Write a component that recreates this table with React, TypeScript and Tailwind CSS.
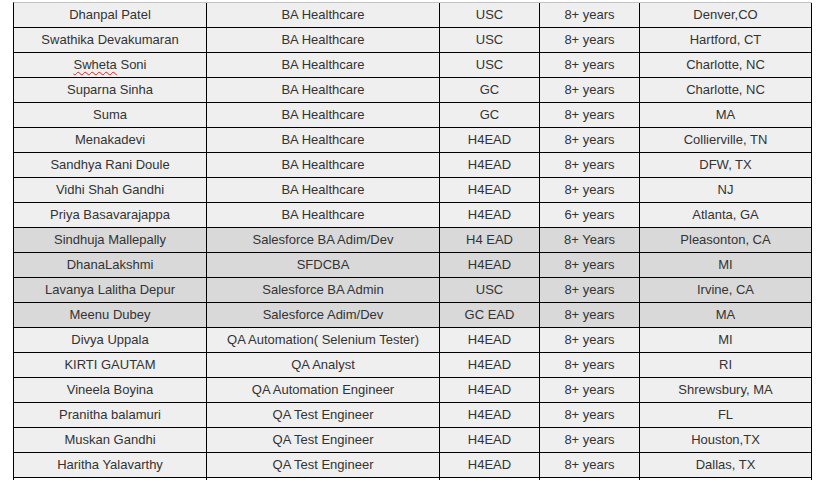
import React from 'react';

interface Candidate {
  name: string;
  skill: string;
  visa: string;
  exp: string;
  location: string;
  shaded?: boolean;
}

const candidates: Candidate[] = [
  { name: 'Dhanpal Patel', skill: 'BA Healthcare', visa: 'USC', exp: '8+ years', location: 'Denver,CO' },
  { name: 'Swathika Devakumaran', skill: 'BA Healthcare', visa: 'USC', exp: '8+ years', location: 'Hartford, CT' },
  { name: 'Swheta Soni', skill: 'BA Healthcare', visa: 'USC', exp: '8+ years', location: 'Charlotte, NC' },
  { name: 'Suparna Sinha', skill: 'BA Healthcare', visa: 'GC', exp: '8+ years', location: 'Charlotte, NC' },
  { name: 'Suma', skill: 'BA Healthcare', visa: 'GC', exp: '8+ years', location: 'MA' },
  { name: 'Menakadevi', skill: 'BA Healthcare', visa: 'H4EAD', exp: '8+ years', location: 'Collierville, TN' },
  { name: 'Sandhya Rani Doule', skill: 'BA Healthcare', visa: 'H4EAD', exp: '8+ years', location: 'DFW, TX' },
  { name: 'Vidhi Shah Gandhi', skill: 'BA Healthcare', visa: 'H4EAD', exp: '8+ years', location: 'NJ' },
  { name: 'Priya Basavarajappa', skill: 'BA Healthcare', visa: 'H4EAD', exp: '6+ years', location: 'Atlanta, GA' },
  { name: 'Sindhuja Mallepally', skill: 'Salesforce BA Adim/Dev', visa: 'H4 EAD', exp: '8+ Years', location: 'Pleasonton, CA', shaded: true },
  { name: 'DhanaLakshmi', skill: 'SFDCBA', visa: 'H4EAD', exp: '8+ years', location: 'MI', shaded: true },
  { name: 'Lavanya Lalitha Depur', skill: 'Salesforce BA Admin', visa: 'USC', exp: '8+ years', location: 'Irvine, CA', shaded: true },
  { name: 'Meenu Dubey', skill: 'Salesforce Adim/Dev', visa: 'GC EAD', exp: '8+ years', location: 'MA', shaded: true },
  { name: 'Divya Uppala', skill: 'QA Automation( Selenium Tester)', visa: 'H4EAD', exp: '8+ years', location: 'MI' },
  { name: 'KIRTI GAUTAM', skill: 'QA Analyst', visa: 'H4EAD', exp: '8+ years', location: 'RI' },
  { name: 'Vineela Boyina', skill: 'QA Automation Engineer', visa: 'H4EAD', exp: '8+ years', location: 'Shrewsbury, MA' },
  { name: 'Pranitha balamuri', skill: 'QA Test Engineer', visa: 'H4EAD', exp: '8+ years', location: 'FL' },
  { name: 'Muskan Gandhi', skill: 'QA Test Engineer', visa: 'H4EAD', exp: '8+ years', location: 'Houston,TX' },
  { name: 'Haritha Yalavarthy', skill: 'QA Test Engineer', visa: 'H4EAD', exp: '8+ years', location: 'Dallas, TX' },
];

const cell = 'flex items-center justify-center border-r border-black whitespace-nowrap overflow-hidden';

const App: React.FC = () => {
  return (
    <div className="w-[826px] h-[480px] bg-white overflow-hidden pt-[2px] pl-[13px] font-['Liberation_Sans',Arial,sans-serif] text-[13px] text-[#333]">
      <div className="w-[799px] border-l border-t border-l-black border-t-[#c4c4c4]">
        {candidates.map((c, i) => (
          <div
            key={i}
            className={`grid grid-cols-[193px_233px_100px_100px_172px] h-[25px] border-b border-black ${
              c.shaded ? 'bg-[#d9d9d9]' : 'bg-[#efefef]'
            }`}
          >
            <div className={cell}>
              {c.name === 'Swheta Soni' ? (
                <span>
                  <span className="underline decoration-wavy decoration-[#e02020] decoration-1 underline-offset-2">Swheta</span> Soni
                </span>
              ) : (
                c.name
              )}
            </div>
            <div className={cell}>{c.skill}</div>
            <div className={cell}>{c.visa}</div>
            <div className={cell}>{c.exp}</div>
            <div className={cell}>{c.location}</div>
          </div>
        ))}
        <div className="grid grid-cols-[193px_233px_100px_100px_172px] h-[25px] bg-white">
          <div className={cell}></div>
          <div className={cell}></div>
          <div className={cell}></div>
          <div className={cell}></div>
          <div className={cell}></div>
        </div>
      </div>
    </div>
  );
};

export default App;
